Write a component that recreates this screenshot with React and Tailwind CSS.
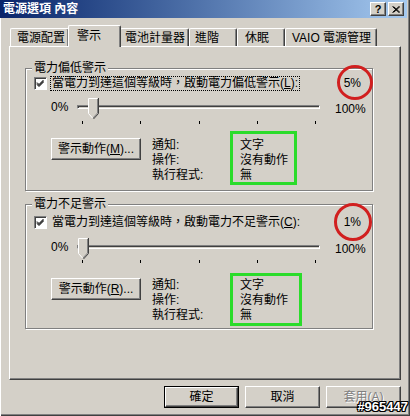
import React from 'react'

const font = "font-['Liberation_Sans','Noto_Sans_CJK_TC',sans-serif]"
const raised = 'border border-t-white border-l-white border-r-[#404040] border-b-[#404040] shadow-[inset_-1px_-1px_0_#808080]'

const U = ({ children }) => <span className="underline underline-offset-[1px]">{children}</span>

function Btn({ children, w = 'w-[75px]', isDefault, disabled }) {
  const inner = (
    <div className={`${raised} h-full w-full flex items-center justify-center text-[12px] leading-[14px] ${disabled ? 'text-[#808080] [text-shadow:1px_1px_0_#fff]' : 'text-black'}`}>
      {children}
    </div>
  )
  return isDefault
    ? <div className={`${w} h-[22px] border border-black`}>{inner}</div>
    : <div className={`${w} h-[22px]`}>{inner}</div>
}

function Checkbox() {
  return (
    <div className="w-[13px] h-[13px] border border-t-[#808080] border-l-[#808080] border-r-white border-b-white shadow-[inset_1px_1px_0_#404040] bg-white flex items-center justify-center shrink-0">
      <svg width="9" height="9" viewBox="0 0 9 9">
        <path d="M1 3.5 L3 5.5 L7.5 1 M1 4.5 L3 6.5 L7.5 2 M1 5.5 L3 7.5 L7.5 3" stroke="#000" strokeWidth="1" fill="none" />
      </svg>
    </div>
  )
}

function Thumb() {
  return (
    <svg width="11" height="22" viewBox="0 0 11 22" className="block">
      <polygon points="0,0 10,0 10,15 5,21 0,15" fill="#d4d0c8" />
      <polyline points="0.5,15.5 0.5,0.5 9.5,0.5" stroke="#fff" fill="none" />
      <polyline points="10.5,0 10.5,15.5 5.5,21" stroke="#404040" fill="none" />
      <polyline points="9.5,1 9.5,15 5,20" stroke="#808080" fill="none" />
      <line x1="0.5" y1="15.5" x2="4.5" y2="20" stroke="#fff" />
    </svg>
  )
}

function Group({ legend, label, pct, focused, thumbLeft, sp, circle, box, h, shortcut }) {
  return (
    <div className={`relative ml-[15px] w-[348px] ${h} border border-[#808080] shadow-[1px_1px_0_#fff,inset_1px_1px_0_#fff]`}>
      <div className="absolute -top-[9px] left-[6px] bg-[#d4d0c8] px-[2px] text-[12px] leading-[16px]">{legend}</div>

      <div className={`flex items-center h-[16px] ${sp[0]}`}>
        <div className="ml-[8px]"><Checkbox /></div>
        <div className={`ml-[3px] h-[15px] px-[1px] flex items-center text-[12px] leading-[14px] border ${focused ? 'border-dotted border-black' : 'border-transparent'}`}>
          當電力到達這個等級時，啟動{label}(<U>{shortcut}</U>):
        </div>
        <div className="ml-auto mr-[11px] relative text-[12px] leading-[14px]">
          {pct}
          <div className={`absolute ${circle} rounded-[50%] border-[3px] border-[#d11f1f]`} />
        </div>
      </div>

      <div className={`flex h-[22px] ${sp[1]}`}>
        <div className="ml-[25px] w-[26px] pt-[2px] text-[12px] leading-[14px]">0%</div>
        <div className="relative w-[243px] h-full">
          <div className="absolute left-0 right-0 top-[7px] h-[4px] border border-t-[#808080] border-l-[#808080] border-b-white border-r-white shadow-[inset_1px_1px_0_#404040]" />
          <div className={`absolute top-0 ${thumbLeft}`}><Thumb /></div>
        </div>
        <div className="ml-[15px] pt-[4px] text-[12px] leading-[14px]">100%</div>
      </div>

      <div className={`ml-[56px] w-[234px] flex justify-between ${sp[2]}`}>
        {[0, 1, 2, 3, 4].map(i => <div key={i} className="w-px h-[3px] bg-black" />)}
      </div>

      <div className={`flex items-start ${sp[3]}`}>
        <div className="ml-[25px]">
          <Btn w="w-[90px]">警示動作(<U>{shortcut === 'L' ? 'M' : 'R'}</U>)...</Btn>
        </div>
        <div className="ml-[11px] w-[88px] text-[12px] leading-[15px]">
          <div>通知:</div>
          <div>操作:</div>
          <div>執行程式:</div>
        </div>
        <div className="relative text-[12px] leading-[15px]">
          <div>文字</div>
          <div>沒有動作</div>
          <div>無</div>
          <div className={`absolute ${box} border-[3px] border-[#2bdc2b]`} />
        </div>
      </div>
    </div>
  )
}

export default function App() {
  const tabs = [
    { t: '電源配置', w: 'w-[59px]', pl: 'pl-[6px]' },
    { t: '警示', w: 'w-[53px]', pl: 'pl-[8px]', sel: true },
    { t: '電池計量器', w: 'w-[69px]', pl: 'pl-[4px]' },
    { t: '進階', w: 'w-[48px]', pl: 'pl-[5px]' },
    { t: '休眠', w: 'w-[48px]', pl: 'pl-[7px]' },
    { t: 'VAIO 電源管理', w: 'w-[92px]', pl: 'pl-[6px]' },
  ]
  return (
    <div className={`relative w-[410px] h-[416px] bg-[#d4d0c8] text-black overflow-hidden ${font} shadow-[inset_1px_0_0_#fff,inset_-1px_-1px_0_#404040,inset_-2px_-2px_0_#808080]`}>
      {/* title bar */}
      <div className="mr-[3px] h-[18px] bg-gradient-to-r from-[#0a246a] to-[#a6caf0] flex items-center pl-[3px] pr-[3px]">
        <span className="text-white font-bold text-[12px] leading-[14px]">電源選項 內容</span>
        <div className="ml-auto flex gap-[2px]">
          <div className={`${raised} bg-[#d4d0c8] w-[16px] h-[14px] flex items-center justify-center text-[11px] font-bold leading-none`}>?</div>
          <div className={`${raised} bg-[#d4d0c8] w-[16px] h-[14px] flex items-center justify-center`}>
            <svg width="8" height="7" viewBox="0 0 8 7"><path d="M0.5 0.5 L7 6.5 M1.5 0.5 L8 6.5 M7 0.5 L0.5 6.5 M8 0.5 L1.5 6.5" stroke="#000" /></svg>
          </div>
        </div>
      </div>

      {/* tabs */}
      <div className="mt-[8px] h-[20px] flex items-end pl-[10px]">
        {tabs.map(tab => (
          <div
            key={tab.t}
            className={`${tab.w} ${tab.pl} flex items-center text-[12px] leading-[14px] border-t border-l border-r border-t-white border-l-white border-r-[#404040] rounded-t-[2px] shadow-[inset_-1px_0_0_#808080] ${tab.sel ? 'h-[22px] -mb-[1px] -mx-[1px] relative z-10 bg-[#d4d0c8] pb-[2px]' : 'h-[18px]'}`}
          >
            {tab.t}
          </div>
        ))}
      </div>

      {/* panel */}
      <div className="ml-[9px] w-[392px] h-[334px] border border-t-white border-l-white border-r-[#404040] border-b-[#404040] shadow-[inset_-1px_-1px_0_#808080] pt-[21px]">
        <Group
          legend="電力偏低警示"
          label="電力偏低警示"
          shortcut="L"
          pct="5%"
          focused
          thumbLeft="left-[11px]"
          h="h-[123px]"
          sp={['mt-[6px]', 'mt-[7px]', 'mt-[1px]', 'mt-[14px]']}
          circle="-left-[7px] -top-[11px] w-[36px] h-[35px]"
          box="-left-[10px] -top-[7px] w-[67px] h-[54px]"
        />
        <div className="h-[13px]" />
        <Group
          legend="電力不足警示"
          label="電力不足警示"
          shortcut="C"
          pct="1%"
          thumbLeft="left-[1px]"
          h="h-[125px]"
          sp={['mt-[9px]', 'mt-[8px]', 'mt-0', 'mt-[15px]']}
          circle="-left-[10px] -top-[12px] w-[38px] h-[38px]"
          box="-left-[10px] -top-[5px] w-[72px] h-[53px]"
        />
      </div>

      {/* buttons */}
      <div className="mt-[6px] flex justify-end gap-[6px] pr-[9px]">
        <Btn isDefault>確定</Btn>
        <Btn>取消</Btn>
        <Btn disabled>套用(<U>A</U>)</Btn>
      </div>

      <div className="absolute right-[2px] bottom-[2px] text-white font-bold text-[13px] leading-[14px] font-['Liberation_Sans',sans-serif] [text-shadow:1px_0_0_#000,-1px_0_0_#000,0_1px_0_#000,0_-1px_0_#000,1px_1px_0_#000,-1px_-1px_0_#000,1px_-1px_0_#000,-1px_1px_0_#000]">
        #965447
      </div>
    </div>
  )
}
